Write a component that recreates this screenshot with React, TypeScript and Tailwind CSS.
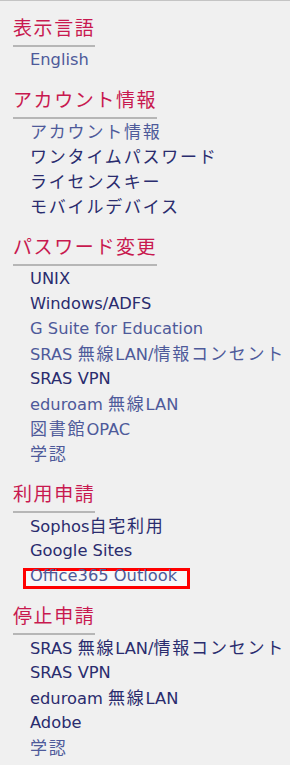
import React from "react";

type Item = { label: string; light?: boolean; boxed?: boolean };
type Section = { title: string; items: Item[] };

const sections: Section[] = [
  { title: "表示言語", items: [{ label: "English", light: true }] },
  {
    title: "アカウント情報",
    items: [
      { label: "アカウント情報", light: true },
      { label: "ワンタイムパスワード" },
      { label: "ライセンスキー" },
      { label: "モバイルデバイス" },
    ],
  },
  {
    title: "パスワード変更",
    items: [
      { label: "UNIX" },
      { label: "Windows/ADFS" },
      { label: "G Suite for Education", light: true },
      { label: "SRAS 無線LAN/情報コンセント", light: true },
      { label: "SRAS VPN" },
      { label: "eduroam 無線LAN", light: true },
      { label: "図書館OPAC", light: true },
      { label: "学認", light: true },
    ],
  },
  {
    title: "利用申請",
    items: [
      { label: "Sophos自宅利用" },
      { label: "Google Sites" },
      { label: "Office365 Outlook", light: true, boxed: true },
    ],
  },
  {
    title: "停止申請",
    items: [
      { label: "SRAS 無線LAN/情報コンセント" },
      { label: "SRAS VPN" },
      { label: "eduroam 無線LAN" },
      { label: "Adobe" },
      { label: "学認", light: true },
    ],
  },
];

const CJK = /[\u3000-\u9fff\uff00-\uffef]/;

function Runs({ text }: { text: string }) {
  const parts = text.match(/[\u3000-\u9fff\uff00-\uffef]+|[^\u3000-\u9fff\uff00-\uffef]+/g) || [];
  return (
    <>
      {parts.map((p, i) =>
        CJK.test(p) ? (
          <span
            key={i}
            className="text-[17px] leading-[16px] tracking-[1.8px]"
            style={{ fontFamily: '"Noto Sans CJK JP", sans-serif' }}
          >
            {p}
          </span>
        ) : (
          <span
            key={i}
            className="text-[16.3px] leading-[16px]"
            style={{ fontFamily: '"DejaVu Sans", "Noto Sans CJK JP", sans-serif' }}
          >
            {p}
          </span>
        )
      )}
    </>
  );
}

export default function App() {
  return (
    <div
      className="w-[290px] h-[765px] overflow-hidden bg-[#f0f0f0] border-t border-[#c4c4c4]"
      style={{ fontFamily: '"DejaVu Sans", "Noto Sans CJK JP", sans-serif' }}
    >
      <div className="pt-[12px] flex flex-col gap-[13px]">
        {sections.map((s) => (
          <div key={s.title} className="flex flex-col">
            <div className="pl-[13px] flex">
              <div className="border-b-2 border-[#b6b6b6] pb-[4px]">
                <span
                  className="block whitespace-nowrap text-[19px] tracking-[1.6px] leading-[28px] text-[#c8194f]"
                  style={{ fontFamily: '"Noto Sans CJK JP", sans-serif' }}
                >
                  {s.title}
                </span>
              </div>
            </div>
            <ul className="flex flex-col">
              {s.items.map((it, i) => (
                <li
                  key={i}
                  className="relative pl-[30px] h-[25px] flex items-center whitespace-nowrap"
                >
                  {it.boxed && (
                    <span className="absolute left-[23px] top-[5px] w-[167px] h-[21px] border-[3px] border-[#ff0000] bg-[#f8f8f8]" />
                  )}
                  <span
                    className={
                      "relative block leading-[16px] " +
                      (it.light ? "text-[#4e5a9a]" : "text-[#2a2c6e]")
                    }
                  >
                    <Runs text={it.label} />
                  </span>
                </li>
              ))}
            </ul>
          </div>
        ))}
      </div>
    </div>
  );
}
